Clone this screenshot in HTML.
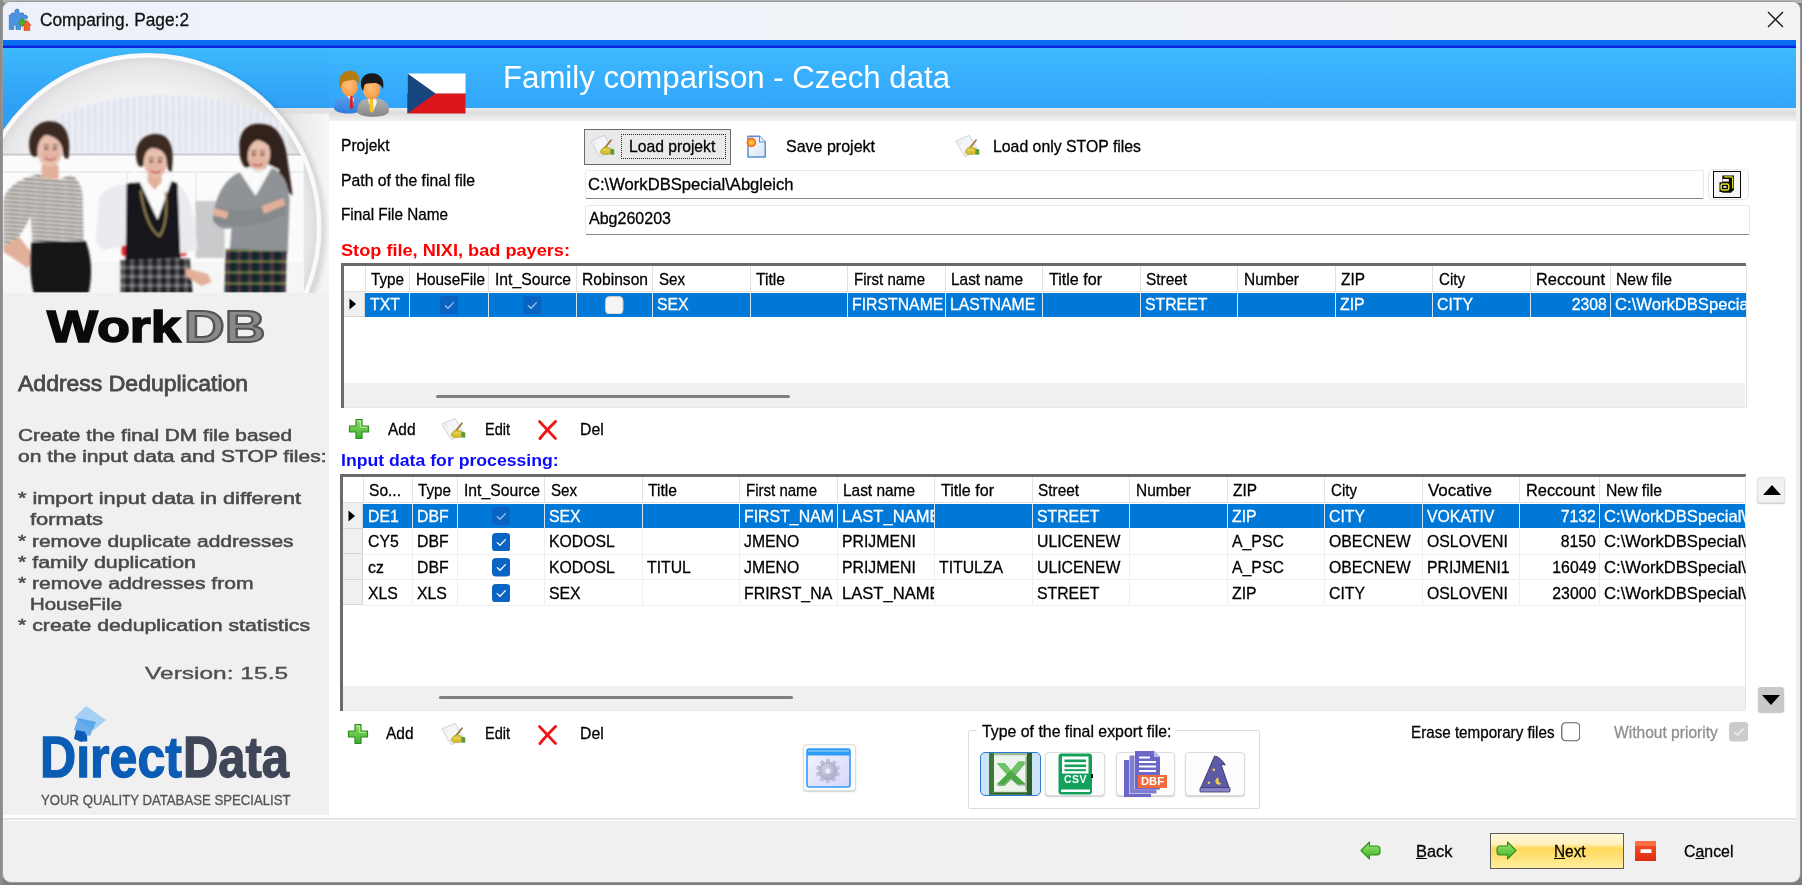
<!DOCTYPE html>
<html lang="en"><head><meta charset="utf-8"><title>Comparing. Page:2</title>
<style>
html,body{margin:0;padding:0}
body{width:1802px;height:885px;overflow:hidden;position:relative;background:#7c7c7c;font-family:"Liberation Sans", sans-serif}
#w div,#w span.t,#w svg{position:absolute;box-sizing:border-box}
#w span.t{white-space:pre;display:block}
#w{position:absolute;left:0;top:0;width:1802px;height:885px;overflow:hidden}
</style></head><body><div id="w">
<div style="left:0px;top:0px;width:1802px;height:2.5px;background:#b4b4b4"></div>
<div style="left:0px;top:0px;width:2.5px;height:885px;background:#8c8c8c"></div>
<div style="left:1.5px;top:0.5px;width:1799px;height:882.5px;background:#f0f0f0;border-radius:9px;border:1px solid #9a9a9a"></div>
<div style="left:2.5px;top:1.5px;width:1797px;height:38px;background:linear-gradient(90deg,#edf2fa 0%,#f0f3f8 50%,#f3f3f3 100%);border-radius:8px 8px 0 0"></div>
<span class="t" style="left:39.70px;top:10.56px;font-size:18px;line-height:18px;color:#111;-webkit-text-stroke:.3px;transform:scaleX(0.9607);transform-origin:left top;">Comparing. Page:2</span>
<svg style="left:1767px;top:11px" width="17" height="17" viewBox="0 0 17 17"><path d="M1 1 L16 16 M16 1 L1 16" stroke="#111" stroke-width="1.3" fill="none"/></svg>
<div style="left:3.4px;top:40px;width:1792.6px;height:8px;background:linear-gradient(#0a6cf0 0,#0a6cf0 68%,#0a22dc 70%,#0a22dc 100%)"></div>
<div style="left:3.4px;top:48px;width:1792.6px;height:60px;background:linear-gradient(#3db9fd,#32a4fb)"></div>
<div style="left:3.4px;top:108px;width:1792.6px;height:13px;background:linear-gradient(#ececec,#dcdcdc 35%,#f2f2f2)"></div>
<span class="t" style="left:503.00px;top:62.36px;font-size:31px;line-height:31px;color:#fff;transform:scaleX(1.0056);transform-origin:left top;">Family comparison - Czech data</span>
<div style="left:329px;top:121px;width:1467px;height:697px;background:#fff"></div>
<div style="left:3.4px;top:48px;width:325.6px;height:767px;background:#f0f0f0"></div>
<div style="left:3.4px;top:815px;width:1792.6px;height:2.8px;background:#fff"></div>
<div style="left:3.4px;top:817.8px;width:1792.6px;height:1.8px;background:#e3e3e3"></div>
<div style="left:3.4px;top:819.6px;width:1792.6px;height:1.6px;background:#fbfbfb"></div>
<span class="t" style="left:341.00px;top:137.11px;font-size:17px;line-height:17px;color:#000;-webkit-text-stroke:.3px;transform:scaleX(0.9164);transform-origin:left top;">Projekt</span>
<span class="t" style="left:341.00px;top:171.61px;font-size:17px;line-height:17px;color:#000;-webkit-text-stroke:.3px;transform:scaleX(0.9267);transform-origin:left top;">Path of the final file</span>
<span class="t" style="left:341.00px;top:205.91px;font-size:17px;line-height:17px;color:#000;-webkit-text-stroke:.3px;transform:scaleX(0.8988);transform-origin:left top;">Final File Name</span>
<div style="left:584.2px;top:129px;width:147px;height:35.5px;background:#e9e9e9;border:1.6px solid #6c6c6c"></div>
<div style="left:620.5px;top:133.5px;width:105.5px;height:25.5px;border:1px dotted #222"></div>
<span class="t" style="left:628.70px;top:138.11px;font-size:17px;line-height:17px;color:#000;-webkit-text-stroke:.3px;transform:scaleX(0.9222);transform-origin:left top;">Load projekt</span>
<span class="t" style="left:785.50px;top:138.11px;font-size:17px;line-height:17px;color:#000;-webkit-text-stroke:.3px;transform:scaleX(0.9418);transform-origin:left top;">Save projekt</span>
<span class="t" style="left:992.50px;top:138.11px;font-size:17px;line-height:17px;color:#000;-webkit-text-stroke:.3px;transform:scaleX(0.9304);transform-origin:left top;">Load only STOP files</span>
<div style="left:584.5px;top:170px;width:1119.5px;height:28.8px;background:#fff;border:1px solid #e9e9e9;border-bottom:1.5px solid #858585;border-radius:2px"></div>
<div style="left:584.5px;top:204.5px;width:1165px;height:30.5px;background:#fff;border:1px solid #e9e9e9;border-bottom:1.5px solid #858585;border-radius:2px"></div>
<span class="t" style="left:588.00px;top:176.11px;font-size:17px;line-height:17px;color:#000;-webkit-text-stroke:.3px;transform:scaleX(0.9768);transform-origin:left top;">C:\WorkDBSpecial\Abgleich</span>
<span class="t" style="left:589.00px;top:210.11px;font-size:17px;line-height:17px;color:#000;-webkit-text-stroke:.3px;transform:scaleX(0.9427);transform-origin:left top;">Abg260203</span>
<div style="left:1707.5px;top:169.3px;width:41.3px;height:30.5px;background:#fdfdfd;border:1px solid #e6e6e6;border-radius:5px"></div>
<div style="left:1712.9px;top:171px;width:28.2px;height:26.6px;background:#f7f7f7;border:1.7px solid #0c0c0c"></div>
<svg style="left:1718.5px;top:175.3px" width="16" height="18.5" viewBox="0 0 16 18.5"><path d="M3.3 0.6 H15 V14.8 L12 17.8 H3.3 Z" fill="#0a0a0a"/><path d="M5.2 1.9 H12.2 Q13.7 1.9 13.7 3.4 V13.6" stroke="#e6e619" stroke-width="1.2" fill="none"/><rect x="3.6" y="4" width="6.2" height="2.6" fill="#f4f4f4"/><rect x="0.5" y="7.3" width="11" height="9.7" fill="#0a0a0a"/><rect x="2.1" y="9" width="7.6" height="6.1" rx="1.6" fill="none" stroke="#e6e619" stroke-width="1.5"/><rect x="4.3" y="11" width="3.2" height="2" fill="#cfcfcf"/></svg>
<span class="t" style="left:341.00px;top:241.61px;font-size:17px;line-height:17px;color:#ff0000;font-weight:700;transform:scaleX(1.0679);transform-origin:left top;">Stop file, NIXI, bad payers:</span>
<span class="t" style="left:341.00px;top:451.81px;font-size:17px;line-height:17px;color:#0a0aff;font-weight:700;transform:scaleX(1.0382);transform-origin:left top;">Input data for processing:</span>
<div style="left:341.3px;top:263.1px;width:1405.2px;height:144.89999999999998px;background:#fff"></div>
<div style="left:341.3px;top:263.1px;width:1405.2px;height:2.5px;background:#6b6b6b"></div>
<div style="left:341.3px;top:263.1px;width:2.5px;height:144.89999999999998px;background:#6b6b6b"></div>
<div style="left:1745.5px;top:265.1px;width:1px;height:142.89999999999998px;background:#e3e3e3"></div>
<div style="left:343.8px;top:407px;width:1402.7px;height:1px;background:#e8e8e8"></div>
<div style="left:343.8px;top:383px;width:1401.7px;height:24px;background:#f0f0f0"></div>
<div style="left:436px;top:394.8px;width:354px;height:3px;background:#7f7f7f;border-radius:1.5px"></div>
<div style="left:364.5px;top:265.6px;width:1px;height:26.0px;background:#e2e2e2"></div>
<div style="left:409.0px;top:265.6px;width:1px;height:26.0px;background:#e2e2e2"></div>
<div style="left:488.2px;top:265.6px;width:1px;height:26.0px;background:#e2e2e2"></div>
<div style="left:575.5px;top:265.6px;width:1px;height:26.0px;background:#e2e2e2"></div>
<div style="left:652.0px;top:265.6px;width:1px;height:26.0px;background:#e2e2e2"></div>
<div style="left:749.5px;top:265.6px;width:1px;height:26.0px;background:#e2e2e2"></div>
<div style="left:847.0px;top:265.6px;width:1px;height:26.0px;background:#e2e2e2"></div>
<div style="left:944.5px;top:265.6px;width:1px;height:26.0px;background:#e2e2e2"></div>
<div style="left:1042.0px;top:265.6px;width:1px;height:26.0px;background:#e2e2e2"></div>
<div style="left:1139.5px;top:265.6px;width:1px;height:26.0px;background:#e2e2e2"></div>
<div style="left:1237.0px;top:265.6px;width:1px;height:26.0px;background:#e2e2e2"></div>
<div style="left:1334.5px;top:265.6px;width:1px;height:26.0px;background:#e2e2e2"></div>
<div style="left:1432.0px;top:265.6px;width:1px;height:26.0px;background:#e2e2e2"></div>
<div style="left:1529.5px;top:265.6px;width:1px;height:26.0px;background:#e2e2e2"></div>
<div style="left:1609.5px;top:265.6px;width:1px;height:26.0px;background:#e2e2e2"></div>
<div style="left:343.8px;top:291.1px;width:1401.7px;height:1px;background:#e2e2e2"></div>
<span class="t" style="left:371.00px;top:270.71px;font-size:17px;line-height:17px;color:#000;-webkit-text-stroke:.3px;transform:scaleX(0.8953);transform-origin:left top;">Type</span>
<span class="t" style="left:415.50px;top:270.71px;font-size:17px;line-height:17px;color:#000;-webkit-text-stroke:.3px;transform:scaleX(0.9014);transform-origin:left top;">HouseFile</span>
<span class="t" style="left:494.70px;top:270.71px;font-size:17px;line-height:17px;color:#000;-webkit-text-stroke:.3px;transform:scaleX(0.9242);transform-origin:left top;">Int_Source</span>
<span class="t" style="left:582.00px;top:270.71px;font-size:17px;line-height:17px;color:#000;-webkit-text-stroke:.3px;transform:scaleX(0.9189);transform-origin:left top;">Robinson</span>
<span class="t" style="left:658.50px;top:270.71px;font-size:17px;line-height:17px;color:#000;-webkit-text-stroke:.3px;transform:scaleX(0.8875);transform-origin:left top;">Sex</span>
<span class="t" style="left:756.00px;top:270.71px;font-size:17px;line-height:17px;color:#000;-webkit-text-stroke:.3px;transform:scaleX(0.9206);transform-origin:left top;">Title</span>
<span class="t" style="left:853.50px;top:270.71px;font-size:17px;line-height:17px;color:#000;-webkit-text-stroke:.3px;transform:scaleX(0.8842);transform-origin:left top;">First name</span>
<span class="t" style="left:951.00px;top:270.71px;font-size:17px;line-height:17px;color:#000;-webkit-text-stroke:.3px;transform:scaleX(0.9069);transform-origin:left top;">Last name</span>
<span class="t" style="left:1048.50px;top:270.71px;font-size:17px;line-height:17px;color:#000;-webkit-text-stroke:.3px;transform:scaleX(0.9456);transform-origin:left top;">Title for</span>
<span class="t" style="left:1146.00px;top:270.71px;font-size:17px;line-height:17px;color:#000;-webkit-text-stroke:.3px;transform:scaleX(0.9039);transform-origin:left top;">Street</span>
<span class="t" style="left:1243.50px;top:270.71px;font-size:17px;line-height:17px;color:#000;-webkit-text-stroke:.3px;transform:scaleX(0.9096);transform-origin:left top;">Number</span>
<span class="t" style="left:1341.00px;top:270.71px;font-size:17px;line-height:17px;color:#000;-webkit-text-stroke:.3px;transform:scaleX(0.9073);transform-origin:left top;">ZIP</span>
<span class="t" style="left:1438.50px;top:270.71px;font-size:17px;line-height:17px;color:#000;-webkit-text-stroke:.3px;transform:scaleX(0.8879);transform-origin:left top;">City</span>
<span class="t" style="left:1536.00px;top:270.71px;font-size:17px;line-height:17px;color:#000;-webkit-text-stroke:.3px;transform:scaleX(0.9606);transform-origin:left top;">Reccount</span>
<span class="t" style="left:1616.00px;top:270.71px;font-size:17px;line-height:17px;color:#000;-webkit-text-stroke:.3px;transform:scaleX(0.9261);transform-origin:left top;">New file</span>
<div style="left:343.8px;top:291.6px;width:21.19999999999999px;height:25.65px;background:#f0f0f0;border-right:1px solid #d5d5d5;border-bottom:1px solid #d5d5d5"></div>
<div style="left:365px;top:292.8px;width:1380.5px;height:24.15px;background:#0078d7"></div>
<svg style="left:349.3px;top:298.425px" width="8" height="12" viewBox="0 0 8 12"><path d="M0.5 0.5 L7 6 L0.5 11.5Z" fill="#000"/></svg>
<div style="left:409.0px;top:292.6px;width:1px;height:24.65px;background:#d9e6f3"></div>
<div style="left:488.2px;top:292.6px;width:1px;height:24.65px;background:#d9e6f3"></div>
<div style="left:575.5px;top:292.6px;width:1px;height:24.65px;background:#d9e6f3"></div>
<div style="left:652.0px;top:292.6px;width:1px;height:24.65px;background:#d9e6f3"></div>
<div style="left:749.5px;top:292.6px;width:1px;height:24.65px;background:#d9e6f3"></div>
<div style="left:847.0px;top:292.6px;width:1px;height:24.65px;background:#d9e6f3"></div>
<div style="left:944.5px;top:292.6px;width:1px;height:24.65px;background:#d9e6f3"></div>
<div style="left:1042.0px;top:292.6px;width:1px;height:24.65px;background:#d9e6f3"></div>
<div style="left:1139.5px;top:292.6px;width:1px;height:24.65px;background:#d9e6f3"></div>
<div style="left:1237.0px;top:292.6px;width:1px;height:24.65px;background:#d9e6f3"></div>
<div style="left:1334.5px;top:292.6px;width:1px;height:24.65px;background:#d9e6f3"></div>
<div style="left:1432.0px;top:292.6px;width:1px;height:24.65px;background:#d9e6f3"></div>
<div style="left:1529.5px;top:292.6px;width:1px;height:24.65px;background:#d9e6f3"></div>
<div style="left:1609.5px;top:292.6px;width:1px;height:24.65px;background:#d9e6f3"></div>
<span class="t" style="left:369.50px;top:296.31px;font-size:17px;line-height:17px;color:#fff;-webkit-text-stroke:.3px;transform:scaleX(0.93);transform-origin:left top;">TXT</span>
<svg style="left:439.85px;top:295.57px" width="18.5" height="18.5" viewBox="0 0 18.5 18.5"><rect x="0" y="0" width="18.5" height="18.5" rx="4" fill="#0a63c0"/><path d="M5.2 9.6 L8 12.3 L13.4 6.6" stroke="#9cc4ee" stroke-width="1.3" fill="none" stroke-linecap="round" stroke-linejoin="round"/></svg>
<svg style="left:523.10px;top:295.57px" width="18.5" height="18.5" viewBox="0 0 18.5 18.5"><rect x="0" y="0" width="18.5" height="18.5" rx="4" fill="#0a63c0"/><path d="M5.2 9.6 L8 12.3 L13.4 6.6" stroke="#9cc4ee" stroke-width="1.3" fill="none" stroke-linecap="round" stroke-linejoin="round"/></svg>
<svg style="left:605.00px;top:295.57px" width="18.5" height="18.5" viewBox="0 0 18.5 18.5"><rect x="0.5" y="0.5" width="17.5" height="17.5" rx="4" fill="#f4f4f4" stroke="#c9c9c9"/></svg>
<span class="t" style="left:657.00px;top:296.31px;font-size:17px;line-height:17px;color:#fff;-webkit-text-stroke:.3px;transform:scaleX(0.93);transform-origin:left top;">SEX</span>
<div style="left:852.0px;top:291.6px;width:92.5px;height:25.65px;overflow:hidden"><span class="t" style="left:0;top:4.71px;font-size:17px;line-height:17px;color:#fff;-webkit-text-stroke:.3px;transform:scaleX(0.93);transform-origin:left top">FIRSTNAME</span></div>
<div style="left:949.5px;top:291.6px;width:92.5px;height:25.65px;overflow:hidden"><span class="t" style="left:0;top:4.71px;font-size:17px;line-height:17px;color:#fff;-webkit-text-stroke:.3px;transform:scaleX(0.93);transform-origin:left top">LASTNAME</span></div>
<span class="t" style="left:1144.50px;top:296.31px;font-size:17px;line-height:17px;color:#fff;-webkit-text-stroke:.3px;transform:scaleX(0.93);transform-origin:left top;">STREET</span>
<span class="t" style="left:1339.50px;top:296.31px;font-size:17px;line-height:17px;color:#fff;-webkit-text-stroke:.3px;transform:scaleX(0.93);transform-origin:left top;">ZIP</span>
<span class="t" style="left:1437.00px;top:296.31px;font-size:17px;line-height:17px;color:#fff;-webkit-text-stroke:.3px;transform:scaleX(0.93);transform-origin:left top;">CITY</span>
<span class="t" style="left:1568.67px;top:296.31px;font-size:17px;line-height:17px;color:#fff;-webkit-text-stroke:.3px;transform:scaleX(0.93);transform-origin:right top;">2308</span>
<div style="left:1614.5px;top:291.6px;width:131.5px;height:25.65px;overflow:hidden"><span class="t" style="left:0;top:4.71px;font-size:17px;line-height:17px;color:#fff;-webkit-text-stroke:.3px;transform:scaleX(0.978);transform-origin:left top">C:\WorkDBSpecial\</span></div>
<div style="left:340.1px;top:474.4px;width:1405.9px;height:236.60000000000002px;background:#fff"></div>
<div style="left:340.1px;top:474.4px;width:1405.9px;height:2.5px;background:#6b6b6b"></div>
<div style="left:340.1px;top:474.4px;width:2.5px;height:236.60000000000002px;background:#6b6b6b"></div>
<div style="left:1745px;top:476.4px;width:1px;height:234.60000000000002px;background:#e3e3e3"></div>
<div style="left:342.6px;top:710px;width:1403.4px;height:1px;background:#e8e8e8"></div>
<div style="left:342.6px;top:685.5px;width:1402.4px;height:24.5px;background:#f0f0f0"></div>
<div style="left:438.7px;top:696.3px;width:354.3px;height:3px;background:#7f7f7f;border-radius:1.5px"></div>
<div style="left:362.8px;top:476.9px;width:1px;height:26.0px;background:#e2e2e2"></div>
<div style="left:411.5px;top:476.9px;width:1px;height:26.0px;background:#e2e2e2"></div>
<div style="left:457.0px;top:476.9px;width:1px;height:26.0px;background:#e2e2e2"></div>
<div style="left:544.0px;top:476.9px;width:1px;height:26.0px;background:#e2e2e2"></div>
<div style="left:641.5px;top:476.9px;width:1px;height:26.0px;background:#e2e2e2"></div>
<div style="left:739.0px;top:476.9px;width:1px;height:26.0px;background:#e2e2e2"></div>
<div style="left:836.5px;top:476.9px;width:1px;height:26.0px;background:#e2e2e2"></div>
<div style="left:934.0px;top:476.9px;width:1px;height:26.0px;background:#e2e2e2"></div>
<div style="left:1031.5px;top:476.9px;width:1px;height:26.0px;background:#e2e2e2"></div>
<div style="left:1129.0px;top:476.9px;width:1px;height:26.0px;background:#e2e2e2"></div>
<div style="left:1226.5px;top:476.9px;width:1px;height:26.0px;background:#e2e2e2"></div>
<div style="left:1324.0px;top:476.9px;width:1px;height:26.0px;background:#e2e2e2"></div>
<div style="left:1421.5px;top:476.9px;width:1px;height:26.0px;background:#e2e2e2"></div>
<div style="left:1519.0px;top:476.9px;width:1px;height:26.0px;background:#e2e2e2"></div>
<div style="left:1599.0px;top:476.9px;width:1px;height:26.0px;background:#e2e2e2"></div>
<div style="left:342.6px;top:502.4px;width:1402.4px;height:1px;background:#e2e2e2"></div>
<span class="t" style="left:369.30px;top:482.01px;font-size:17px;line-height:17px;color:#000;-webkit-text-stroke:.3px;transform:scaleX(0.9151);transform-origin:left top;">So...</span>
<span class="t" style="left:418.00px;top:482.01px;font-size:17px;line-height:17px;color:#000;-webkit-text-stroke:.3px;transform:scaleX(0.8953);transform-origin:left top;">Type</span>
<span class="t" style="left:463.50px;top:482.01px;font-size:17px;line-height:17px;color:#000;-webkit-text-stroke:.3px;transform:scaleX(0.9242);transform-origin:left top;">Int_Source</span>
<span class="t" style="left:550.50px;top:482.01px;font-size:17px;line-height:17px;color:#000;-webkit-text-stroke:.3px;transform:scaleX(0.8875);transform-origin:left top;">Sex</span>
<span class="t" style="left:648.00px;top:482.01px;font-size:17px;line-height:17px;color:#000;-webkit-text-stroke:.3px;transform:scaleX(0.9206);transform-origin:left top;">Title</span>
<span class="t" style="left:745.50px;top:482.01px;font-size:17px;line-height:17px;color:#000;-webkit-text-stroke:.3px;transform:scaleX(0.8842);transform-origin:left top;">First name</span>
<span class="t" style="left:843.00px;top:482.01px;font-size:17px;line-height:17px;color:#000;-webkit-text-stroke:.3px;transform:scaleX(0.9069);transform-origin:left top;">Last name</span>
<span class="t" style="left:940.50px;top:482.01px;font-size:17px;line-height:17px;color:#000;-webkit-text-stroke:.3px;transform:scaleX(0.9456);transform-origin:left top;">Title for</span>
<span class="t" style="left:1038.00px;top:482.01px;font-size:17px;line-height:17px;color:#000;-webkit-text-stroke:.3px;transform:scaleX(0.9039);transform-origin:left top;">Street</span>
<span class="t" style="left:1135.50px;top:482.01px;font-size:17px;line-height:17px;color:#000;-webkit-text-stroke:.3px;transform:scaleX(0.9096);transform-origin:left top;">Number</span>
<span class="t" style="left:1233.00px;top:482.01px;font-size:17px;line-height:17px;color:#000;-webkit-text-stroke:.3px;transform:scaleX(0.9073);transform-origin:left top;">ZIP</span>
<span class="t" style="left:1330.50px;top:482.01px;font-size:17px;line-height:17px;color:#000;-webkit-text-stroke:.3px;transform:scaleX(0.8879);transform-origin:left top;">City</span>
<span class="t" style="left:1428.00px;top:482.01px;font-size:17px;line-height:17px;color:#000;-webkit-text-stroke:.3px;transform:scaleX(0.9959);transform-origin:left top;">Vocative</span>
<span class="t" style="left:1525.50px;top:482.01px;font-size:17px;line-height:17px;color:#000;-webkit-text-stroke:.3px;transform:scaleX(0.9606);transform-origin:left top;">Reccount</span>
<span class="t" style="left:1605.50px;top:482.01px;font-size:17px;line-height:17px;color:#000;-webkit-text-stroke:.3px;transform:scaleX(0.9261);transform-origin:left top;">New file</span>
<div style="left:342.6px;top:502.9px;width:20.69999999999999px;height:25.65px;background:#f0f0f0;border-right:1px solid #d5d5d5;border-bottom:1px solid #d5d5d5"></div>
<div style="left:363.3px;top:504.09999999999997px;width:1381.7px;height:24.15px;background:#0078d7"></div>
<svg style="left:348.1px;top:509.725px" width="8" height="12" viewBox="0 0 8 12"><path d="M0.5 0.5 L7 6 L0.5 11.5Z" fill="#000"/></svg>
<div style="left:411.5px;top:503.9px;width:1px;height:24.65px;background:#d9e6f3"></div>
<div style="left:457.0px;top:503.9px;width:1px;height:24.65px;background:#d9e6f3"></div>
<div style="left:544.0px;top:503.9px;width:1px;height:24.65px;background:#d9e6f3"></div>
<div style="left:641.5px;top:503.9px;width:1px;height:24.65px;background:#d9e6f3"></div>
<div style="left:739.0px;top:503.9px;width:1px;height:24.65px;background:#d9e6f3"></div>
<div style="left:836.5px;top:503.9px;width:1px;height:24.65px;background:#d9e6f3"></div>
<div style="left:934.0px;top:503.9px;width:1px;height:24.65px;background:#d9e6f3"></div>
<div style="left:1031.5px;top:503.9px;width:1px;height:24.65px;background:#d9e6f3"></div>
<div style="left:1129.0px;top:503.9px;width:1px;height:24.65px;background:#d9e6f3"></div>
<div style="left:1226.5px;top:503.9px;width:1px;height:24.65px;background:#d9e6f3"></div>
<div style="left:1324.0px;top:503.9px;width:1px;height:24.65px;background:#d9e6f3"></div>
<div style="left:1421.5px;top:503.9px;width:1px;height:24.65px;background:#d9e6f3"></div>
<div style="left:1519.0px;top:503.9px;width:1px;height:24.65px;background:#d9e6f3"></div>
<div style="left:1599.0px;top:503.9px;width:1px;height:24.65px;background:#d9e6f3"></div>
<span class="t" style="left:367.80px;top:507.61px;font-size:17px;line-height:17px;color:#fff;-webkit-text-stroke:.3px;transform:scaleX(0.93);transform-origin:left top;">DE1</span>
<span class="t" style="left:416.50px;top:507.61px;font-size:17px;line-height:17px;color:#fff;-webkit-text-stroke:.3px;transform:scaleX(0.93);transform-origin:left top;">DBF</span>
<svg style="left:491.75px;top:506.88px" width="18.5" height="18.5" viewBox="0 0 18.5 18.5"><rect x="0" y="0" width="18.5" height="18.5" rx="4" fill="#0a63c0"/><path d="M5.2 9.6 L8 12.3 L13.4 6.6" stroke="#9cc4ee" stroke-width="1.3" fill="none" stroke-linecap="round" stroke-linejoin="round"/></svg>
<span class="t" style="left:549.00px;top:507.61px;font-size:17px;line-height:17px;color:#fff;-webkit-text-stroke:.3px;transform:scaleX(0.93);transform-origin:left top;">SEX</span>
<div style="left:744.0px;top:502.9px;width:92.5px;height:25.65px;overflow:hidden"><span class="t" style="left:0;top:4.71px;font-size:17px;line-height:17px;color:#fff;-webkit-text-stroke:.3px;transform:scaleX(0.934);transform-origin:left top">FIRST_NAM</span></div>
<div style="left:841.5px;top:502.9px;width:92.5px;height:25.65px;overflow:hidden"><span class="t" style="left:0;top:4.71px;font-size:17px;line-height:17px;color:#fff;-webkit-text-stroke:.3px;transform:scaleX(0.975);transform-origin:left top">LAST_NAME</span></div>
<span class="t" style="left:1036.50px;top:507.61px;font-size:17px;line-height:17px;color:#fff;-webkit-text-stroke:.3px;transform:scaleX(0.93);transform-origin:left top;">STREET</span>
<span class="t" style="left:1231.50px;top:507.61px;font-size:17px;line-height:17px;color:#fff;-webkit-text-stroke:.3px;transform:scaleX(0.93);transform-origin:left top;">ZIP</span>
<span class="t" style="left:1329.00px;top:507.61px;font-size:17px;line-height:17px;color:#fff;-webkit-text-stroke:.3px;transform:scaleX(0.93);transform-origin:left top;">CITY</span>
<span class="t" style="left:1426.50px;top:507.61px;font-size:17px;line-height:17px;color:#fff;-webkit-text-stroke:.3px;transform:scaleX(0.93);transform-origin:left top;">VOKATIV</span>
<span class="t" style="left:1558.17px;top:507.61px;font-size:17px;line-height:17px;color:#fff;-webkit-text-stroke:.3px;transform:scaleX(0.93);transform-origin:right top;">7132</span>
<div style="left:1604.0px;top:502.9px;width:141.5px;height:25.65px;overflow:hidden"><span class="t" style="left:0;top:4.71px;font-size:17px;line-height:17px;color:#fff;-webkit-text-stroke:.3px;transform:scaleX(0.978);transform-origin:left top">C:\WorkDBSpecial\</span></div>
<div style="left:342.6px;top:528.55px;width:20.69999999999999px;height:25.65px;background:#f0f0f0;border-right:1px solid #d5d5d5;border-bottom:1px solid #d5d5d5"></div>
<div style="left:363.3px;top:553.6999999999999px;width:1381.7px;height:1px;background:#efefef"></div>
<div style="left:411.5px;top:529.55px;width:1px;height:24.65px;background:#efefef"></div>
<div style="left:457.0px;top:529.55px;width:1px;height:24.65px;background:#efefef"></div>
<div style="left:544.0px;top:529.55px;width:1px;height:24.65px;background:#efefef"></div>
<div style="left:641.5px;top:529.55px;width:1px;height:24.65px;background:#efefef"></div>
<div style="left:739.0px;top:529.55px;width:1px;height:24.65px;background:#efefef"></div>
<div style="left:836.5px;top:529.55px;width:1px;height:24.65px;background:#efefef"></div>
<div style="left:934.0px;top:529.55px;width:1px;height:24.65px;background:#efefef"></div>
<div style="left:1031.5px;top:529.55px;width:1px;height:24.65px;background:#efefef"></div>
<div style="left:1129.0px;top:529.55px;width:1px;height:24.65px;background:#efefef"></div>
<div style="left:1226.5px;top:529.55px;width:1px;height:24.65px;background:#efefef"></div>
<div style="left:1324.0px;top:529.55px;width:1px;height:24.65px;background:#efefef"></div>
<div style="left:1421.5px;top:529.55px;width:1px;height:24.65px;background:#efefef"></div>
<div style="left:1519.0px;top:529.55px;width:1px;height:24.65px;background:#efefef"></div>
<div style="left:1599.0px;top:529.55px;width:1px;height:24.65px;background:#efefef"></div>
<span class="t" style="left:367.80px;top:533.26px;font-size:17px;line-height:17px;color:#000;-webkit-text-stroke:.3px;transform:scaleX(0.93);transform-origin:left top;">CY5</span>
<span class="t" style="left:416.50px;top:533.26px;font-size:17px;line-height:17px;color:#000;-webkit-text-stroke:.3px;transform:scaleX(0.93);transform-origin:left top;">DBF</span>
<svg style="left:491.75px;top:532.52px" width="18.5" height="18.5" viewBox="0 0 18.5 18.5"><rect x="0" y="0" width="18.5" height="18.5" rx="4" fill="#0a64c4"/><path d="M5.2 9.6 L8 12.3 L13.4 6.6" stroke="#fff" stroke-width="1.3" fill="none" stroke-linecap="round" stroke-linejoin="round"/></svg>
<span class="t" style="left:549.00px;top:533.26px;font-size:17px;line-height:17px;color:#000;-webkit-text-stroke:.3px;transform:scaleX(0.93);transform-origin:left top;">KODOSL</span>
<span class="t" style="left:744.00px;top:533.26px;font-size:17px;line-height:17px;color:#000;-webkit-text-stroke:.3px;transform:scaleX(0.93);transform-origin:left top;">JMENO</span>
<span class="t" style="left:841.50px;top:533.26px;font-size:17px;line-height:17px;color:#000;-webkit-text-stroke:.3px;transform:scaleX(0.93);transform-origin:left top;">PRIJMENI</span>
<span class="t" style="left:1036.50px;top:533.26px;font-size:17px;line-height:17px;color:#000;-webkit-text-stroke:.3px;transform:scaleX(0.93);transform-origin:left top;">ULICENEW</span>
<span class="t" style="left:1231.50px;top:533.26px;font-size:17px;line-height:17px;color:#000;-webkit-text-stroke:.3px;transform:scaleX(0.93);transform-origin:left top;">A_PSC</span>
<span class="t" style="left:1329.00px;top:533.26px;font-size:17px;line-height:17px;color:#000;-webkit-text-stroke:.3px;transform:scaleX(0.93);transform-origin:left top;">OBECNEW</span>
<span class="t" style="left:1426.50px;top:533.26px;font-size:17px;line-height:17px;color:#000;-webkit-text-stroke:.3px;transform:scaleX(0.93);transform-origin:left top;">OSLOVENI</span>
<span class="t" style="left:1558.17px;top:533.26px;font-size:17px;line-height:17px;color:#000;-webkit-text-stroke:.3px;transform:scaleX(0.93);transform-origin:right top;">8150</span>
<div style="left:1604.0px;top:528.55px;width:141.5px;height:25.65px;overflow:hidden"><span class="t" style="left:0;top:4.71px;font-size:17px;line-height:17px;color:#000;-webkit-text-stroke:.3px;transform:scaleX(0.978);transform-origin:left top">C:\WorkDBSpecial\</span></div>
<div style="left:342.6px;top:554.1999999999999px;width:20.69999999999999px;height:25.65px;background:#f0f0f0;border-right:1px solid #d5d5d5;border-bottom:1px solid #d5d5d5"></div>
<div style="left:363.3px;top:579.3499999999999px;width:1381.7px;height:1px;background:#efefef"></div>
<div style="left:411.5px;top:555.1999999999999px;width:1px;height:24.65px;background:#efefef"></div>
<div style="left:457.0px;top:555.1999999999999px;width:1px;height:24.65px;background:#efefef"></div>
<div style="left:544.0px;top:555.1999999999999px;width:1px;height:24.65px;background:#efefef"></div>
<div style="left:641.5px;top:555.1999999999999px;width:1px;height:24.65px;background:#efefef"></div>
<div style="left:739.0px;top:555.1999999999999px;width:1px;height:24.65px;background:#efefef"></div>
<div style="left:836.5px;top:555.1999999999999px;width:1px;height:24.65px;background:#efefef"></div>
<div style="left:934.0px;top:555.1999999999999px;width:1px;height:24.65px;background:#efefef"></div>
<div style="left:1031.5px;top:555.1999999999999px;width:1px;height:24.65px;background:#efefef"></div>
<div style="left:1129.0px;top:555.1999999999999px;width:1px;height:24.65px;background:#efefef"></div>
<div style="left:1226.5px;top:555.1999999999999px;width:1px;height:24.65px;background:#efefef"></div>
<div style="left:1324.0px;top:555.1999999999999px;width:1px;height:24.65px;background:#efefef"></div>
<div style="left:1421.5px;top:555.1999999999999px;width:1px;height:24.65px;background:#efefef"></div>
<div style="left:1519.0px;top:555.1999999999999px;width:1px;height:24.65px;background:#efefef"></div>
<div style="left:1599.0px;top:555.1999999999999px;width:1px;height:24.65px;background:#efefef"></div>
<span class="t" style="left:367.80px;top:558.91px;font-size:17px;line-height:17px;color:#000;-webkit-text-stroke:.3px;transform:scaleX(0.93);transform-origin:left top;">cz</span>
<span class="t" style="left:416.50px;top:558.91px;font-size:17px;line-height:17px;color:#000;-webkit-text-stroke:.3px;transform:scaleX(0.93);transform-origin:left top;">DBF</span>
<svg style="left:491.75px;top:558.17px" width="18.5" height="18.5" viewBox="0 0 18.5 18.5"><rect x="0" y="0" width="18.5" height="18.5" rx="4" fill="#0a64c4"/><path d="M5.2 9.6 L8 12.3 L13.4 6.6" stroke="#fff" stroke-width="1.3" fill="none" stroke-linecap="round" stroke-linejoin="round"/></svg>
<span class="t" style="left:549.00px;top:558.91px;font-size:17px;line-height:17px;color:#000;-webkit-text-stroke:.3px;transform:scaleX(0.93);transform-origin:left top;">KODOSL</span>
<span class="t" style="left:646.50px;top:558.91px;font-size:17px;line-height:17px;color:#000;-webkit-text-stroke:.3px;transform:scaleX(0.93);transform-origin:left top;">TITUL</span>
<span class="t" style="left:744.00px;top:558.91px;font-size:17px;line-height:17px;color:#000;-webkit-text-stroke:.3px;transform:scaleX(0.93);transform-origin:left top;">JMENO</span>
<span class="t" style="left:841.50px;top:558.91px;font-size:17px;line-height:17px;color:#000;-webkit-text-stroke:.3px;transform:scaleX(0.93);transform-origin:left top;">PRIJMENI</span>
<span class="t" style="left:939.00px;top:558.91px;font-size:17px;line-height:17px;color:#000;-webkit-text-stroke:.3px;transform:scaleX(0.93);transform-origin:left top;">TITULZA</span>
<span class="t" style="left:1036.50px;top:558.91px;font-size:17px;line-height:17px;color:#000;-webkit-text-stroke:.3px;transform:scaleX(0.93);transform-origin:left top;">ULICENEW</span>
<span class="t" style="left:1231.50px;top:558.91px;font-size:17px;line-height:17px;color:#000;-webkit-text-stroke:.3px;transform:scaleX(0.93);transform-origin:left top;">A_PSC</span>
<span class="t" style="left:1329.00px;top:558.91px;font-size:17px;line-height:17px;color:#000;-webkit-text-stroke:.3px;transform:scaleX(0.93);transform-origin:left top;">OBECNEW</span>
<span class="t" style="left:1426.50px;top:558.91px;font-size:17px;line-height:17px;color:#000;-webkit-text-stroke:.3px;transform:scaleX(0.93);transform-origin:left top;">PRIJMENI1</span>
<span class="t" style="left:1548.72px;top:558.91px;font-size:17px;line-height:17px;color:#000;-webkit-text-stroke:.3px;transform:scaleX(0.93);transform-origin:right top;">16049</span>
<div style="left:1604.0px;top:554.1999999999999px;width:141.5px;height:25.65px;overflow:hidden"><span class="t" style="left:0;top:4.71px;font-size:17px;line-height:17px;color:#000;-webkit-text-stroke:.3px;transform:scaleX(0.978);transform-origin:left top">C:\WorkDBSpecial\</span></div>
<div style="left:342.6px;top:579.8499999999999px;width:20.69999999999999px;height:25.65px;background:#f0f0f0;border-right:1px solid #d5d5d5;border-bottom:1px solid #d5d5d5"></div>
<div style="left:363.3px;top:604.9999999999999px;width:1381.7px;height:1px;background:#efefef"></div>
<div style="left:411.5px;top:580.8499999999999px;width:1px;height:24.65px;background:#efefef"></div>
<div style="left:457.0px;top:580.8499999999999px;width:1px;height:24.65px;background:#efefef"></div>
<div style="left:544.0px;top:580.8499999999999px;width:1px;height:24.65px;background:#efefef"></div>
<div style="left:641.5px;top:580.8499999999999px;width:1px;height:24.65px;background:#efefef"></div>
<div style="left:739.0px;top:580.8499999999999px;width:1px;height:24.65px;background:#efefef"></div>
<div style="left:836.5px;top:580.8499999999999px;width:1px;height:24.65px;background:#efefef"></div>
<div style="left:934.0px;top:580.8499999999999px;width:1px;height:24.65px;background:#efefef"></div>
<div style="left:1031.5px;top:580.8499999999999px;width:1px;height:24.65px;background:#efefef"></div>
<div style="left:1129.0px;top:580.8499999999999px;width:1px;height:24.65px;background:#efefef"></div>
<div style="left:1226.5px;top:580.8499999999999px;width:1px;height:24.65px;background:#efefef"></div>
<div style="left:1324.0px;top:580.8499999999999px;width:1px;height:24.65px;background:#efefef"></div>
<div style="left:1421.5px;top:580.8499999999999px;width:1px;height:24.65px;background:#efefef"></div>
<div style="left:1519.0px;top:580.8499999999999px;width:1px;height:24.65px;background:#efefef"></div>
<div style="left:1599.0px;top:580.8499999999999px;width:1px;height:24.65px;background:#efefef"></div>
<span class="t" style="left:367.80px;top:584.56px;font-size:17px;line-height:17px;color:#000;-webkit-text-stroke:.3px;transform:scaleX(0.93);transform-origin:left top;">XLS</span>
<span class="t" style="left:416.50px;top:584.56px;font-size:17px;line-height:17px;color:#000;-webkit-text-stroke:.3px;transform:scaleX(0.93);transform-origin:left top;">XLS</span>
<svg style="left:491.75px;top:583.82px" width="18.5" height="18.5" viewBox="0 0 18.5 18.5"><rect x="0" y="0" width="18.5" height="18.5" rx="4" fill="#0a64c4"/><path d="M5.2 9.6 L8 12.3 L13.4 6.6" stroke="#fff" stroke-width="1.3" fill="none" stroke-linecap="round" stroke-linejoin="round"/></svg>
<span class="t" style="left:549.00px;top:584.56px;font-size:17px;line-height:17px;color:#000;-webkit-text-stroke:.3px;transform:scaleX(0.93);transform-origin:left top;">SEX</span>
<div style="left:744.0px;top:579.8499999999999px;width:92.5px;height:25.65px;overflow:hidden"><span class="t" style="left:0;top:4.71px;font-size:17px;line-height:17px;color:#000;-webkit-text-stroke:.3px;transform:scaleX(0.934);transform-origin:left top">FRIRST_NA</span></div>
<div style="left:841.5px;top:579.8499999999999px;width:92.5px;height:25.65px;overflow:hidden"><span class="t" style="left:0;top:4.71px;font-size:17px;line-height:17px;color:#000;-webkit-text-stroke:.3px;transform:scaleX(0.975);transform-origin:left top">LAST_NAME</span></div>
<span class="t" style="left:1036.50px;top:584.56px;font-size:17px;line-height:17px;color:#000;-webkit-text-stroke:.3px;transform:scaleX(0.93);transform-origin:left top;">STREET</span>
<span class="t" style="left:1231.50px;top:584.56px;font-size:17px;line-height:17px;color:#000;-webkit-text-stroke:.3px;transform:scaleX(0.93);transform-origin:left top;">ZIP</span>
<span class="t" style="left:1329.00px;top:584.56px;font-size:17px;line-height:17px;color:#000;-webkit-text-stroke:.3px;transform:scaleX(0.93);transform-origin:left top;">CITY</span>
<span class="t" style="left:1426.50px;top:584.56px;font-size:17px;line-height:17px;color:#000;-webkit-text-stroke:.3px;transform:scaleX(0.93);transform-origin:left top;">OSLOVENI</span>
<span class="t" style="left:1548.72px;top:584.56px;font-size:17px;line-height:17px;color:#000;-webkit-text-stroke:.3px;transform:scaleX(0.93);transform-origin:right top;">23000</span>
<div style="left:1604.0px;top:579.8499999999999px;width:141.5px;height:25.65px;overflow:hidden"><span class="t" style="left:0;top:4.71px;font-size:17px;line-height:17px;color:#000;-webkit-text-stroke:.3px;transform:scaleX(0.978);transform-origin:left top">C:\WorkDBSpecial\</span></div>
<svg style="left:348.2px;top:418.4px" width="22" height="22" viewBox="0 0 22 22"><defs><linearGradient id="gp418" x1="0" y1="0" x2="0" y2="1"><stop offset="0" stop-color="#8fe06a"/><stop offset="1" stop-color="#3fae2a"/></linearGradient></defs><path d="M8 1.5h6v6.5h6.5v6H14v6.5H8V14H1.5V8H8z" fill="url(#gp418)" stroke="#2f8a22" stroke-width="1.2" stroke-linejoin="round"/><path d="M9.3 3h3.4v6.3h6.3" stroke="#c9f5b4" stroke-width="1" fill="none" opacity=".8"/></svg>
<svg style="left:441px;top:417.5px" width="25" height="23.00" viewBox="0 0 25 23"><path d="M0.8 6 L14 0.3 L23.3 15.4 L10.1 21.8Z" fill="#f3f5f8" stroke="#c9cdd4" stroke-width=".9" stroke-linejoin="round"/><path d="M3.2 7.2 L6 6 M4.2 9.4 L7 8.2" stroke="#d9dde3" stroke-width=".8"/><path d="M21 5.2 L14.2 13.6" stroke="#9a7440" stroke-width="1.7" stroke-linecap="round"/><path d="M10.3 16.6 C11 13.5 14.5 11.6 17.2 12.1 C19.3 12.5 20.8 13.6 21.6 15.2 L21.2 18.6 C18.5 19.6 15.5 19.6 12.6 19.2 C11 19 10.1 18 10.3 16.6Z" fill="#d6c033" stroke="#b39b22" stroke-width=".7"/><path d="M13 15.5 C15 14.6 17 14.6 19 15.6" stroke="#f0e27a" stroke-width="1" fill="none"/><path d="M20.6 13.8 L24.2 14.6 L24.3 19.8 L20.3 19.6Z" fill="#5a9a38"/></svg>
<svg style="left:537.5px;top:420px" width="20" height="20" viewBox="0 0 20 20"><path d="M1.5 1.5 L17.5 18.5" stroke="#f01414" stroke-width="2.6" stroke-linecap="round"/><path d="M17.5 1.5 C12 7 7 12 2 18.5" stroke="#f01414" stroke-width="2.9" stroke-linecap="round" fill="none"/></svg>
<span class="t" style="left:387.50px;top:420.61px;font-size:17px;line-height:17px;color:#000;-webkit-text-stroke:.3px;transform:scaleX(0.9091);transform-origin:left top;">Add</span>
<span class="t" style="left:484.50px;top:420.61px;font-size:17px;line-height:17px;color:#000;-webkit-text-stroke:.3px;transform:scaleX(0.8533);transform-origin:left top;">Edit</span>
<span class="t" style="left:580.00px;top:420.61px;font-size:17px;line-height:17px;color:#000;-webkit-text-stroke:.3px;transform:scaleX(0.9288);transform-origin:left top;">Del</span>
<svg style="left:346.5px;top:723.4000000000001px" width="22" height="22" viewBox="0 0 22 22"><defs><linearGradient id="gp723" x1="0" y1="0" x2="0" y2="1"><stop offset="0" stop-color="#8fe06a"/><stop offset="1" stop-color="#3fae2a"/></linearGradient></defs><path d="M8 1.5h6v6.5h6.5v6H14v6.5H8V14H1.5V8H8z" fill="url(#gp723)" stroke="#2f8a22" stroke-width="1.2" stroke-linejoin="round"/><path d="M9.3 3h3.4v6.3h6.3" stroke="#c9f5b4" stroke-width="1" fill="none" opacity=".8"/></svg>
<svg style="left:441px;top:722.5px" width="25" height="23.00" viewBox="0 0 25 23"><path d="M0.8 6 L14 0.3 L23.3 15.4 L10.1 21.8Z" fill="#f3f5f8" stroke="#c9cdd4" stroke-width=".9" stroke-linejoin="round"/><path d="M3.2 7.2 L6 6 M4.2 9.4 L7 8.2" stroke="#d9dde3" stroke-width=".8"/><path d="M21 5.2 L14.2 13.6" stroke="#9a7440" stroke-width="1.7" stroke-linecap="round"/><path d="M10.3 16.6 C11 13.5 14.5 11.6 17.2 12.1 C19.3 12.5 20.8 13.6 21.6 15.2 L21.2 18.6 C18.5 19.6 15.5 19.6 12.6 19.2 C11 19 10.1 18 10.3 16.6Z" fill="#d6c033" stroke="#b39b22" stroke-width=".7"/><path d="M13 15.5 C15 14.6 17 14.6 19 15.6" stroke="#f0e27a" stroke-width="1" fill="none"/><path d="M20.6 13.8 L24.2 14.6 L24.3 19.8 L20.3 19.6Z" fill="#5a9a38"/></svg>
<svg style="left:537.5px;top:724.5px" width="20" height="20" viewBox="0 0 20 20"><path d="M1.5 1.5 L17.5 18.5" stroke="#f01414" stroke-width="2.6" stroke-linecap="round"/><path d="M17.5 1.5 C12 7 7 12 2 18.5" stroke="#f01414" stroke-width="2.9" stroke-linecap="round" fill="none"/></svg>
<span class="t" style="left:386.00px;top:725.11px;font-size:17px;line-height:17px;color:#000;-webkit-text-stroke:.3px;transform:scaleX(0.9091);transform-origin:left top;">Add</span>
<span class="t" style="left:484.50px;top:725.11px;font-size:17px;line-height:17px;color:#000;-webkit-text-stroke:.3px;transform:scaleX(0.8533);transform-origin:left top;">Edit</span>
<span class="t" style="left:580.00px;top:725.11px;font-size:17px;line-height:17px;color:#000;-webkit-text-stroke:.3px;transform:scaleX(0.9288);transform-origin:left top;">Del</span>
<div style="left:802.8px;top:744.3px;width:53px;height:47px;background:#fdfdfd;border:1px solid #dddddd;border-radius:4px;box-shadow:0 1px 1.5px rgba(0,0,0,.18)"></div>
<svg style="left:805.8px;top:748.4px" width="45" height="40" viewBox="0 0 45 40"><defs><linearGradient id="sb" x1="0" y1="0" x2="1" y2="1"><stop offset="0" stop-color="#f3f3ff"/><stop offset="1" stop-color="#d6d6fa"/></linearGradient><radialGradient id="sg" cx=".4" cy=".35" r=".8"><stop offset="0" stop-color="#d0d0e4"/><stop offset="1" stop-color="#a4a4c4"/></radialGradient></defs><rect x="1" y="1" width="43" height="38" rx="2" fill="url(#sb)" stroke="#2f9cf8" stroke-width="1.6"/><rect x="1" y="1" width="43" height="6.5" fill="#2f9cf8"/><rect x="2" y="2" width="41" height="2" fill="#6cbcfb"/><g transform="translate(22,23)"><g fill="url(#sg)"><circle r="9.3"/><rect x="-2" y="-12" width="4" height="4.5" rx="1.2"/><rect x="-2" y="-12" width="4" height="4.5" rx="1.2" transform="rotate(36)"/><rect x="-2" y="-12" width="4" height="4.5" rx="1.2" transform="rotate(72)"/><rect x="-2" y="-12" width="4" height="4.5" rx="1.2" transform="rotate(108)"/><rect x="-2" y="-12" width="4" height="4.5" rx="1.2" transform="rotate(144)"/><rect x="-2" y="-12" width="4" height="4.5" rx="1.2" transform="rotate(180)"/><rect x="-2" y="-12" width="4" height="4.5" rx="1.2" transform="rotate(216)"/><rect x="-2" y="-12" width="4" height="4.5" rx="1.2" transform="rotate(252)"/><rect x="-2" y="-12" width="4" height="4.5" rx="1.2" transform="rotate(288)"/><rect x="-2" y="-12" width="4" height="4.5" rx="1.2" transform="rotate(324)"/></g><circle r="2.6" fill="#ebebfb"/></g></svg>
<div style="left:968px;top:730px;width:291.5px;height:78.5px;border:1px solid #dcdcdc;border-radius:2px"></div>
<div style="left:977px;top:722px;width:198px;height:14px;background:#fff"></div>
<span class="t" style="left:981.70px;top:722.61px;font-size:17px;line-height:17px;color:#000;-webkit-text-stroke:.3px;transform:scaleX(0.9327);transform-origin:left top;">Type of the final export file:</span>
<div style="left:980.3px;top:752px;width:60.5px;height:44px;background:#cde4f7;border:1.5px solid #2a7ad0;border-radius:5px"></div>
<div style="left:1045px;top:752px;width:59.6px;height:44px;background:#fdfdfd;border:1px solid #dcdcdc;border-radius:4px;box-shadow:0 1px 1.5px rgba(0,0,0,.2)"></div>
<div style="left:1115.8px;top:752px;width:59.7px;height:44px;background:#fdfdfd;border:1px solid #dcdcdc;border-radius:4px;box-shadow:0 1px 1.5px rgba(0,0,0,.2)"></div>
<div style="left:1185.3px;top:752px;width:59.6px;height:44px;background:#fdfdfd;border:1px solid #dcdcdc;border-radius:4px;box-shadow:0 1px 1.5px rgba(0,0,0,.2)"></div>
<svg style="left:989.3px;top:753px" width="43" height="41.8" viewBox="0 0 43 41.8"><rect x="0" y="0" width="43" height="41.8" fill="#d8e6d6"/><rect x="0" y="0" width="43" height="2" fill="#9dbb9a"/><rect x="0" y="39.3" width="43" height="2.5" fill="#2f5f2c"/><rect x="0" y="0" width="5" height="41.8" fill="#3c7a36"/><rect x="38" y="0" width="5" height="41.8" fill="#2f5f2c"/><rect x="5" y="3.3" width="31.5" height="34.5" fill="#eef4ec"/><rect x="36.5" y="3.3" width="1.5" height="34.5" fill="#86b083"/><path d="M8 10 H15.5 L22 17.5 L29.5 8.5 H36 L25.5 21 L36.5 31 H28 L21.5 25 L15 31.5 H7.5 L18 21Z" fill="#2f7a2c" opacity=".55" transform="translate(0.8,1.6)"/><path d="M8 10 H15.5 L22 17.5 L29.5 8.5 H36 L25.5 21 L36.5 31 H28 L21.5 25 L15 31.5 H7.5 L18 21Z" fill="#4aa944"/><path d="M8 10 H15.5 L22 17.5 L18 21Z M29.5 8.5 H36 L25.5 21 L22 17.5Z" fill="#6cc466"/></svg>
<svg style="left:1057.5px;top:753.3px" width="35" height="42" viewBox="0 0 35 42"><rect x="0.5" y="0.5" width="33.5" height="41" rx="3" fill="#12a05a"/><rect x="4" y="3.5" width="26.5" height="17" fill="#fff"/><rect x="6.5" y="6.5" width="21.5" height="2.6" fill="#12a05a"/><rect x="6.5" y="11.5" width="21.5" height="2.6" fill="#12a05a"/><rect x="6.5" y="16.2" width="21.5" height="2" fill="#12a05a"/><rect x="3" y="36.5" width="29" height="2.5" fill="#fff"/><rect x="33" y="21" width="2" height="4" fill="#111"/></svg>
<span class="t" style="left:1064.00px;top:774.31px;font-size:10.5px;line-height:10.5px;color:#fff;font-weight:700;transform:scaleX(0.9959);transform-origin:left top;letter-spacing:.5px;">CSV</span>
<svg style="left:1124px;top:750.5px" width="44" height="46.5" viewBox="0 0 44 46.5"><path d="M0 9 h5 v34 h22 v3.5 h-27z" fill="#6a67c8"/><path d="M5.5 4.5 h5 v34 h22 v4 h-27z" fill="#6a67c8" opacity=".85"/><path d="M11 0 h19 l6 6 v32.5 h-25z" fill="#6a67c8"/><path d="M30 0 l6 6 h-6z" fill="#b9b8ea"/><g stroke="#fff" stroke-width="2"><path d="M15 6.5 h11 M15 11 h17 M15 15.5 h17 M15 20 h17"/></g><rect x="14" y="24" width="29" height="13" fill="#f06a3c"/></svg>
<span class="t" style="left:1141.00px;top:776.41px;font-size:10.5px;line-height:10.5px;color:#fff;font-weight:700;transform:scaleX(1.0651);transform-origin:left top;">DBF</span>
<svg style="left:1196px;top:752px" width="38" height="44" viewBox="1196 752 38 44"><path d="M1214.6 756 C1218 756.5 1222.5 760 1225.2 765 L1221 764.2 L1229.3 788.5 L1200.5 788.5 Z" fill="#5d5ba8" stroke="#34325f" stroke-width=".9" stroke-linejoin="round"/><rect x="1200" y="787.6" width="30" height="4.4" rx=".8" fill="#8886c6" stroke="#34325f" stroke-width=".8"/><path d="M1218.8 777.5 a3.6 3.6 0 1 0 2.6 6.2 a4.4 4.4 0 0 1 -2.6 -6.2z" fill="#f0cf4a"/><circle cx="1213.8" cy="769.8" r="1.3" fill="#f0cf4a"/><circle cx="1209" cy="782.7" r="1.2" fill="#f0cf4a"/></svg>
<span class="t" style="left:1410.50px;top:723.81px;font-size:17px;line-height:17px;color:#000;-webkit-text-stroke:.3px;transform:scaleX(0.8934);transform-origin:left top;">Erase temporary files</span>
<svg style="left:1560.5px;top:722px" width="19.5" height="19.5" viewBox="0 0 19.5 19.5"><rect x="0.75" y="0.75" width="18" height="18" rx="4" fill="#fff" stroke="#5e5e5e" stroke-width="1.2"/></svg>
<span class="t" style="left:1614.40px;top:723.81px;font-size:17px;line-height:17px;color:#8f8f8f;-webkit-text-stroke:.3px;transform:scaleX(0.9155);transform-origin:left top;">Without priority</span>
<svg style="left:1728.5px;top:722px" width="19.5" height="19.5" viewBox="0 0 19.5 19.5"><rect x="0" y="0" width="19.5" height="19.5" rx="4" fill="#cbcbcb"/><path d="M5.6 10.2 L8.5 13 L14.2 7" stroke="#f1f1f1" stroke-width="1.4" fill="none" stroke-linecap="round" stroke-linejoin="round"/></svg>
<div style="left:1757px;top:476.5px;width:27.5px;height:26px;background:#f1f1f1;border:1px solid #e3e3e3;border-radius:3px;box-shadow:0 1px 1.5px rgba(0,0,0,.22)"></div>
<svg style="left:1762.5px;top:485px" width="18" height="10" viewBox="0 0 18 10"><path d="M0 10 L9 0 L18 10Z" fill="#000"/></svg>
<div style="left:1758px;top:686.5px;width:25.6px;height:25.3px;background:#c9c9c9;border-radius:3px;box-shadow:0 1px 1.5px rgba(0,0,0,.25)"></div>
<svg style="left:1762px;top:694.5px" width="18" height="10" viewBox="0 0 18 10"><path d="M0 0 L9 10 L18 0Z" fill="#000"/></svg>
<svg style="left:1360px;top:841.3px" width="21" height="19" viewBox="0 0 21 19"><defs><linearGradient id="ga1360" x1="0" y1="0" x2="0" y2="1"><stop offset="0" stop-color="#9be86f"/><stop offset="1" stop-color="#3fb027"/></linearGradient></defs><g ><path d="M1 9.5 L9.5 1 L9.5 5 L17 5 Q20 5 20 8 L20 11 Q20 14 17 14 L9.5 14 L9.5 18Z" fill="url(#ga1360)" stroke="#2c8f1f" stroke-width="1.1" stroke-linejoin="round"/></g></svg>
<span class="t" style="left:1415.60px;top:842.81px;font-size:17px;line-height:17px;color:#000;-webkit-text-stroke:.3px;transform:scaleX(0.963);transform-origin:left top;"><u>B</u>ack</span>
<div style="left:1489.5px;top:833px;width:134px;height:35.7px;background:linear-gradient(#fff7d8 0,#fff0bc 30%,#ffd95a 42%,#ffe27a 70%,#fff09e 100%);border:1px solid #5c5c5c"></div>
<svg style="left:1496px;top:841.3px" width="21" height="19" viewBox="0 0 21 19"><defs><linearGradient id="ga1496" x1="0" y1="0" x2="0" y2="1"><stop offset="0" stop-color="#9be86f"/><stop offset="1" stop-color="#3fb027"/></linearGradient></defs><g transform="translate(21,0) scale(-1,1)"><path d="M1 9.5 L9.5 1 L9.5 5 L17 5 Q20 5 20 8 L20 11 Q20 14 17 14 L9.5 14 L9.5 18Z" fill="url(#ga1496)" stroke="#2c8f1f" stroke-width="1.1" stroke-linejoin="round"/></g></svg>
<span class="t" style="left:1554.00px;top:842.81px;font-size:17px;line-height:17px;color:#000;-webkit-text-stroke:.3px;transform:scaleX(0.9037);transform-origin:left top;"><u>N</u>ext</span>
<svg style="left:1634.9px;top:840.8px" width="21.5" height="20.5" viewBox="0 0 21.5 20.5"><defs><linearGradient id="gr1" x1="0" y1="0" x2="0" y2="1"><stop offset="0" stop-color="#f7542c"/><stop offset="1" stop-color="#e02c10"/></linearGradient></defs><rect x="0" y="0" width="21.5" height="20.5" rx="1.5" fill="url(#gr1)"/><rect x="0" y="0" width="21.5" height="5" fill="#ff8a5a" opacity=".55"/><rect x="5.5" y="8.3" width="11" height="3.8" rx=".6" fill="#fff"/></svg>
<span class="t" style="left:1683.60px;top:842.81px;font-size:17px;line-height:17px;color:#000;-webkit-text-stroke:.3px;transform:scaleX(0.9335);transform-origin:left top;">C<u>a</u>ncel</span>
<svg style="left:3.4px;top:48px" width="325.6" height="244.5" viewBox="3.4 48 325.6 244.5">
<defs>
<radialGradient id="pc" cx="148" cy="227" r="174" gradientUnits="userSpaceOnUse"><stop offset="0" stop-color="#ffffff"/><stop offset=".55" stop-color="#fbfbfb"/><stop offset=".8" stop-color="#f0f0f1"/><stop offset=".93" stop-color="#e6e6e8"/><stop offset=".968" stop-color="#dcdcde"/><stop offset=".978" stop-color="#fdfdfd"/><stop offset="1" stop-color="#f4f4f4"/></radialGradient>
<linearGradient id="pb" x1="0" y1="0" x2="0" y2="1"><stop offset="0" stop-color="#3db9fd"/><stop offset="1" stop-color="#2f9ff5"/></linearGradient>
<linearGradient id="prs" x1="0" y1="0" x2="1" y2="0"><stop offset="0" stop-color="#d6d6d6"/><stop offset=".5" stop-color="#ebebeb"/><stop offset="1" stop-color="#f6f6f6"/></linearGradient>
<linearGradient id="blinds" x1="0" y1="0" x2="0" y2="1"><stop offset="0" stop-color="#eceef3" stop-opacity="0"/><stop offset=".35" stop-color="#e3e6ee"/><stop offset="1" stop-color="#edeff4"/></linearGradient>
<pattern id="bl" x="0" y="0" width="6.5" height="10" patternUnits="userSpaceOnUse"><rect width="6.5" height="10" fill="#dfe3ee"/><rect x="0" width="2.2" height="10" fill="#f4f5fa"/></pattern>
<pattern id="st" x="0" y="0" width="10" height="4" patternUnits="userSpaceOnUse" patternTransform="rotate(4)"><rect width="10" height="4" fill="#ece9e4"/><rect y="0" width="10" height="1.6" fill="#514c47"/></pattern>
<pattern id="pl1" x="0" y="0" width="9" height="9" patternUnits="userSpaceOnUse"><rect width="9" height="9" fill="#55555a"/><rect width="4" height="9" fill="#26262a"/><rect width="9" height="3.5" fill="#1d1d20" opacity=".6"/><rect x="6" width="1" height="9" fill="#d8d8d8" opacity=".45"/><rect y="6" width="9" height="1" fill="#d8d8d8" opacity=".45"/></pattern>
<pattern id="pl2" x="0" y="0" width="11" height="11" patternUnits="userSpaceOnUse"><rect width="11" height="11" fill="#1f3f45"/><rect width="5" height="11" fill="#16282f"/><rect width="11" height="5" fill="#14242a" opacity=".6"/><rect x="8" width="1" height="11" fill="#c03a3a" opacity=".8"/><rect y="8" width="11" height="1" fill="#b8b84a" opacity=".7"/></pattern>
<clipPath id="cc"><circle cx="148" cy="227" r="169.5"/></clipPath>
<clipPath id="pcut"><rect x="3" y="48" width="301" height="244.5"/></clipPath>
<filter id="b1" x="-20%" y="-20%" width="140%" height="140%"><feGaussianBlur stdDeviation="0.9"/></filter>
<filter id="b2" x="-20%" y="-20%" width="140%" height="140%"><feGaussianBlur stdDeviation="2.2"/></filter>
</defs>
<rect x="3" y="48" width="327" height="60" fill="url(#pb)"/>
<rect x="3" y="108" width="327" height="185" fill="#f3f3f3"/>
<rect x="3" y="107" width="100" height="30" fill="#2f9ff5"/><rect x="268" y="108.5" width="62" height="184" fill="url(#prs)"/>
<rect x="268" y="108" width="62" height="6" fill="#dcdcdc" opacity=".7"/>
<circle cx="151" cy="230" r="176" fill="#000" opacity=".10" filter="url(#b2)"/>
<circle cx="148" cy="227" r="174" fill="url(#pc)"/>
<g clip-path="url(#cc)">
 <path d="M52 154 L52 119 C80 105 120 96 160 95 C210 95 255 105 287 125 L287 154Z" fill="url(#bl)" filter="url(#b1)"/>
 <path d="M52 154 L52 119 C80 105 120 96 160 95 C210 95 255 105 287 125 L287 154Z" fill="url(#blinds)" opacity=".3"/>
 <rect x="3" y="153.5" width="301" height="2.2" fill="#c9cbd0"/>
 <rect x="3" y="155.7" width="301" height="137" fill="#fbfbfb"/>
 <rect x="3" y="171.5" width="301" height="1.2" fill="#e2e3e6"/>
 <rect x="127" y="172" width="1" height="80" fill="#e4e5e8"/><rect x="196" y="172" width="1" height="40" fill="#e4e5e8"/>
 <rect x="3" y="262" width="301" height="31" fill="#f6f6f6"/>
</g>
<g clip-path="url(#pcut)" filter="url(#b1)">
 <!-- laptop -->
 <path d="M196 201 h29 v57 h-29z" fill="#c9cacc"/>
 <!-- red chair -->
 <rect x="122" y="239" width="8" height="17" rx="3" fill="#e0262a"/><rect x="178" y="239" width="9" height="17" rx="3" fill="#e0262a"/>
 <!-- woman 1 -->
 <path d="M42 165 h17 v14 h-17z" fill="#e2b09a"/>
 <path d="M5 196 C12 182 30 175 40 175 C50 181 60 181 70 175 C79 178 82 186 83 196 L84 243 L33 244 L31 215 C26 228 18 240 6 252 L4 252 L4 205Z" fill="url(#st)"/>
 <path d="M4 238 L14 230 L30 250 L33 262 L28 268 L4 252Z" fill="#e2b09a"/><path d="M4 200 L20 190 L32 214 L18 238 L4 246Z" fill="url(#st)"/>
 <path d="M32 242 L86 241 C92 256 93 275 89 293 L34 293 C30 276 30 258 32 242Z" fill="#141416"/>
 <ellipse cx="50" cy="150" rx="12.5" ry="17" fill="#e9bfad"/>
 <path d="M30 150 C27 130 40 120 52 121.5 C66 122 72 136 69 158 C66 160 64 158 63 150 C62 142 56 136 46 135 C40 138 37 146 38 156 C34 158 31 156 30 150Z" fill="#3b2b24"/>
 <ellipse cx="46.7" cy="148.5" rx="2.3" ry="1.2" fill="#4a332b"/><ellipse cx="55.3" cy="148.5" rx="2.3" ry="1.2" fill="#4a332b"/><path d="M44 145.5 q3-1.8 5.6 0 M52.6 145.5 q3-1.8 5.6 0" stroke="#4a332b" stroke-width="1" fill="none"/><ellipse cx="51" cy="154.5" rx="9" ry="7" fill="#dba08c" opacity=".35"/><path d="M45 158 q6 4 11 0" stroke="#c2555f" stroke-width="1.6" fill="none"/>
 <!-- woman 2 -->
 <path d="M100 196 C108 186 122 184 132 184 L132 244 L104 250 L96 242Z" fill="#ebebef"/>
 <path d="M174 184 C186 186 194 200 198 250 L180 254Z" fill="#ebebef"/>
 <path d="M132 170 L146 176 L160 200 L170 172 L176 188 L160 222 L140 200Z" fill="#fafafa"/>
 <path d="M127 184 L140 182 L158 220 L172 181 L178 184 L181 262 L126 264Z" fill="#17171a"/>
 <path d="M141 190 C144 215 152 232 160 236 C166 228 168 210 166 192" stroke="#a08c58" stroke-width="2.2" fill="none" opacity=".85"/>
 <path d="M121 260 L190 258 L193 293 L121 293Z" fill="url(#pl1)"/>
 <path d="M186 268 l22 6 l4 8 l-10 4 l-16-10z" fill="#e2b09a"/>
 <path d="M148 168 h14 v14 l-7 8 l-7-8z" fill="#e2b09a"/>
 <ellipse cx="156" cy="161" rx="12" ry="16.5" fill="#e9bfad"/>
 <path d="M137 160 C134 142 146 133 157 134 C170 134 176 148 172 172 C169 172 167 168 167 160 C166 152 160 148 152 148 C146 150 144 156 144 166 C140 168 138 166 137 160Z" fill="#3b2b24"/>
 <ellipse cx="151.7" cy="161.5" rx="2.3" ry="1.2" fill="#4a332b"/><ellipse cx="160.3" cy="161.5" rx="2.3" ry="1.2" fill="#4a332b"/><path d="M149 158.5 q3-1.8 5.6 0 M157.6 158.5 q3-1.8 5.6 0" stroke="#4a332b" stroke-width="1" fill="none"/><ellipse cx="156" cy="167.5" rx="9" ry="7" fill="#dba08c" opacity=".35"/><path d="M151 171 q5 3.5 10 0" stroke="#c2555f" stroke-width="1.6" fill="none"/>
 <!-- woman 3 -->
 <path d="M240 150 C238 130 250 122 262 124 C278 124 286 140 288 160 C290 175 292 186 293 196 C286 190 280 180 276 170 L246 168 C242 164 240 158 240 150Z" fill="#33241f"/>
 <path d="M236 172 L252 166 L256 186 L268 164 L280 170 L262 200 L246 190Z" fill="#fafafa"/>
 <path d="M213 218 C216 196 224 180 240 172 L256 196 L272 168 C284 172 289 184 290 200 L288 254 L230 252 L232 228 C224 230 216 228 213 218Z" fill="#8f9296"/>
 <path d="M216 206 C236 214 262 210 286 200 L286 214 C262 226 236 230 214 222Z" fill="#85888c"/>
 <path d="M262 206 l22 -8 l2 7 l-22 9z" fill="#e2b09a"/><path d="M215 208 l14 4 l-2 7 l-14-4z" fill="#e2b09a"/>
 <path d="M226 249 L287 251 L286 293 L225 293Z" fill="url(#pl2)"/>
 <ellipse cx="259" cy="154" rx="11.5" ry="16.5" fill="#e9bfad"/>
 <path d="M244 150 C244 136 252 130 262 131 C272 132 278 142 278 158 C274 150 268 142 258 140 C252 142 248 148 248 158 C245 156 244 154 244 150Z" fill="#33241f"/>
 <ellipse cx="254.2" cy="154.5" rx="2.3" ry="1.2" fill="#4a332b"/><ellipse cx="262.8" cy="154.5" rx="2.3" ry="1.2" fill="#4a332b"/><path d="M251.5 151.5 q3-1.8 5.6 0 M260.1 151.5 q3-1.8 5.6 0" stroke="#4a332b" stroke-width="1" fill="none"/><ellipse cx="258.5" cy="160.5" rx="9" ry="7" fill="#dba08c" opacity=".35"/><path d="M253 164 q5 3.5 10 0" stroke="#c2555f" stroke-width="1.6" fill="none"/>
</g>
</svg>
<span class="t" style="left:47.20px;top:304.41px;font-size:45px;line-height:45px;color:#0a0a0a;font-weight:700;transform:scaleX(1.198);transform-origin:left top;-webkit-text-stroke:1.6px #0a0a0a;">Work</span>
<span class="t" style="left:183.50px;top:304.41px;font-size:45px;line-height:45px;color:#8a8a8a;font-weight:700;transform:scaleX(1.2538);transform-origin:left top;-webkit-text-stroke:2px #555;">DB</span>
<span class="t" style="left:17.90px;top:372.55px;font-size:22.5px;line-height:22.5px;color:#4a4a4a;transform:scaleX(1.022);transform-origin:left top;-webkit-text-stroke:.8px #4a4a4a;">Address Deduplication</span>
<span class="t" style="left:17.50px;top:427.86px;font-size:16px;line-height:16px;color:#4a4a4a;transform:scaleX(1.2999);transform-origin:left top;-webkit-text-stroke:.5px #4a4a4a;">Create the final DM file based</span>
<span class="t" style="left:17.50px;top:449.16px;font-size:16px;line-height:16px;color:#4a4a4a;transform:scaleX(1.3121);transform-origin:left top;-webkit-text-stroke:.5px #4a4a4a;">on the input data and STOP files:</span>
<span class="t" style="left:18.00px;top:490.86px;font-size:16px;line-height:16px;color:#4a4a4a;transform:scaleX(1.3559);transform-origin:left top;-webkit-text-stroke:.5px #4a4a4a;">* import input data in different</span>
<span class="t" style="left:29.50px;top:511.96px;font-size:16px;line-height:16px;color:#4a4a4a;transform:scaleX(1.3685);transform-origin:left top;-webkit-text-stroke:.5px #4a4a4a;">formats</span>
<span class="t" style="left:18.00px;top:533.86px;font-size:16px;line-height:16px;color:#4a4a4a;transform:scaleX(1.307);transform-origin:left top;-webkit-text-stroke:.5px #4a4a4a;">* remove duplicate addresses</span>
<span class="t" style="left:18.00px;top:554.66px;font-size:16px;line-height:16px;color:#4a4a4a;transform:scaleX(1.3343);transform-origin:left top;-webkit-text-stroke:.5px #4a4a4a;">* family duplication</span>
<span class="t" style="left:18.00px;top:575.66px;font-size:16px;line-height:16px;color:#4a4a4a;transform:scaleX(1.3176);transform-origin:left top;-webkit-text-stroke:.5px #4a4a4a;">* remove addresses from</span>
<span class="t" style="left:29.50px;top:596.66px;font-size:16px;line-height:16px;color:#4a4a4a;transform:scaleX(1.2772);transform-origin:left top;-webkit-text-stroke:.5px #4a4a4a;">HouseFile</span>
<span class="t" style="left:18.00px;top:617.86px;font-size:16px;line-height:16px;color:#4a4a4a;transform:scaleX(1.3293);transform-origin:left top;-webkit-text-stroke:.5px #4a4a4a;">* create deduplication statistics</span>
<span class="t" style="left:144.50px;top:665.41px;font-size:17px;line-height:17px;color:#4f4f4f;transform:scaleX(1.4418);transform-origin:left top;-webkit-text-stroke:.35px #4f4f4f;">Version: 15.5</span>
<span class="t" style="left:39.60px;top:727.90px;font-size:58px;line-height:58px;color:#0b5cb5;font-weight:700;transform:scaleX(0.8631);transform-origin:left top;-webkit-text-stroke:1.3px #0b5cb5;">Direct</span>
<span class="t" style="left:183.00px;top:727.90px;font-size:58px;line-height:58px;color:#3f4658;font-weight:700;transform:scaleX(0.8432);transform-origin:left top;-webkit-text-stroke:1.3px #3f4658;">Data</span>
<span class="t" style="left:41.00px;top:792.65px;font-size:14px;line-height:14px;color:#555;-webkit-text-stroke:.3px;transform:scaleX(0.9405);transform-origin:left top;">YOUR QUALITY DATABASE SPECIALIST</span>
<svg style="left:64px;top:706px" width="44" height="40" viewBox="0 0 44 40"><path d="M22 0 L42 14 L30 24 L10 12Z" fill="#8cc4f4" opacity=".75"/><path d="M14 12 L32 16 L26 30 L10 24Z" fill="#4a9be8" opacity=".8"/><path d="M12 24 L22 26 L18 36 L10 33Z" fill="#0b5cb5"/></svg>
<svg style="left:590.3px;top:134.8px" width="25" height="23.00" viewBox="0 0 25 23"><path d="M0.8 6 L14 0.3 L23.3 15.4 L10.1 21.8Z" fill="#f3f5f8" stroke="#c9cdd4" stroke-width=".9" stroke-linejoin="round"/><path d="M3.2 7.2 L6 6 M4.2 9.4 L7 8.2" stroke="#d9dde3" stroke-width=".8"/><path d="M21 5.2 L14.2 13.6" stroke="#9a7440" stroke-width="1.7" stroke-linecap="round"/><path d="M10.3 16.6 C11 13.5 14.5 11.6 17.2 12.1 C19.3 12.5 20.8 13.6 21.6 15.2 L21.2 18.6 C18.5 19.6 15.5 19.6 12.6 19.2 C11 19 10.1 18 10.3 16.6Z" fill="#d6c033" stroke="#b39b22" stroke-width=".7"/><path d="M13 15.5 C15 14.6 17 14.6 19 15.6" stroke="#f0e27a" stroke-width="1" fill="none"/><path d="M20.6 13.8 L24.2 14.6 L24.3 19.8 L20.3 19.6Z" fill="#5a9a38"/></svg>
<svg style="left:954.5px;top:134.6px" width="25" height="23.00" viewBox="0 0 25 23"><path d="M0.8 6 L14 0.3 L23.3 15.4 L10.1 21.8Z" fill="#f3f5f8" stroke="#c9cdd4" stroke-width=".9" stroke-linejoin="round"/><path d="M3.2 7.2 L6 6 M4.2 9.4 L7 8.2" stroke="#d9dde3" stroke-width=".8"/><path d="M21 5.2 L14.2 13.6" stroke="#9a7440" stroke-width="1.7" stroke-linecap="round"/><path d="M10.3 16.6 C11 13.5 14.5 11.6 17.2 12.1 C19.3 12.5 20.8 13.6 21.6 15.2 L21.2 18.6 C18.5 19.6 15.5 19.6 12.6 19.2 C11 19 10.1 18 10.3 16.6Z" fill="#d6c033" stroke="#b39b22" stroke-width=".7"/><path d="M13 15.5 C15 14.6 17 14.6 19 15.6" stroke="#f0e27a" stroke-width="1" fill="none"/><path d="M20.6 13.8 L24.2 14.6 L24.3 19.8 L20.3 19.6Z" fill="#5a9a38"/></svg>
<svg style="left:745.5px;top:134.5px" width="20.5" height="23.5" viewBox="0 0 20.5 23.5"><defs><linearGradient id="nd" x1="0" y1="0" x2="1" y2="1"><stop offset="0" stop-color="#ffffff"/><stop offset="1" stop-color="#d5e4f7"/></linearGradient><radialGradient id="ns"><stop offset="0" stop-color="#ffe23a"/><stop offset=".45" stop-color="#ffb428"/><stop offset="1" stop-color="#f0522a"/></radialGradient></defs><path d="M2 1.2 H13.5 L19.3 7 V22 H2Z" fill="url(#nd)" stroke="#5b8fd4" stroke-width="1.5" stroke-linejoin="round"/><path d="M13.5 1.2 V7 H19.3" fill="#eaf2fc" stroke="#5b8fd4" stroke-width="1.1" stroke-linejoin="round"/><circle cx="5.4" cy="7.4" r="4.8" fill="url(#ns)"/></svg>
<svg style="left:407px;top:73px" width="59" height="41" viewBox="0 0 59 41"><rect x="0.5" y="0.5" width="58" height="20.3" fill="#ffffff"/><rect x="0.5" y="20.5" width="58" height="20" fill="#dc161b"/><path d="M0.5 0.5 L28.5 20.5 L0.5 40.5Z" fill="#17457e"/></svg>
<svg style="left:333px;top:70px" width="57" height="47" viewBox="333 70 57 47"><defs>
<radialGradient id="uf1" cx=".45" cy=".4" r=".7"><stop offset="0" stop-color="#ffc27a"/><stop offset="1" stop-color="#f98f3c"/></radialGradient>
<linearGradient id="ub1" x1="0" y1="0" x2="0" y2="1"><stop offset="0" stop-color="#5aa2ee"/><stop offset="1" stop-color="#2f7bd8"/></linearGradient>
<linearGradient id="ub2" x1="0" y1="0" x2="0" y2="1"><stop offset="0" stop-color="#b4b4b4"/><stop offset="1" stop-color="#858585"/></linearGradient></defs>
<path d="M334 108 C334 99 340 95.5 349 95.5 C358 95.5 363 99 363 108 C363 112 355 113.5 348.5 113.5 C342 113.5 334 112 334 108Z" fill="url(#ub1)"/>
<path d="M346.5 95.5 L351.5 95.5 L354 99 L351.5 108 L350 99Z" fill="#f3f3f5"/><path d="M350.2 96 L352.6 96 L353 107.5 L351.5 109.5 L350 107.5Z" fill="#d41f26"/>
<ellipse cx="349.5" cy="87" rx="8.3" ry="9.6" fill="url(#uf1)"/>
<path d="M339.5 86 C337.5 76 344 70.5 350 70.8 C357 70.5 360.5 76.5 359 84 C357.5 80.5 354 79 350 80.2 C346.5 81 344 80.5 342.5 82.5 C342 84 341 86.5 340.5 88.5Z" fill="#b47c10"/>
<path d="M357 111 C357 101.5 363 98 372.5 98 C382 98 389 101.5 389 111 C389 115 380 116.8 373 116.8 C365 116.8 357 115 357 111Z" fill="url(#ub2)"/>
<path d="M368 98 L375 98 L377 102 L373 112 L368.5 102Z" fill="#f2f2f2"/><path d="M370 98.5 L372.8 98.5 L373.5 110.5 L371.5 113 L369.6 110.5Z" fill="#f2c51c"/>
<ellipse cx="371.5" cy="89.5" rx="8.8" ry="10" fill="url(#uf1)"/>
<path d="M361.5 88 C359 79 364.5 73.3 371.5 73.2 C380 73 385 79 383 89 C381.5 85 378 82.5 373 83 C369 83.5 366 83 364.5 85 C364 86.5 363.5 89 363 91Z" fill="#1a1a1c"/>
</svg>
<svg style="left:8px;top:7.5px" width="24" height="23.5" viewBox="8 7.5 24 23.5">
<path d="M15 11.5 C14 8.5 18.5 7.5 19 10 C19.3 11.3 18.6 12 19.2 12.6 L23.5 12.6 L23.5 15 C25.5 13.8 28 15 27.5 17 C27 19 25 19 23.5 18.2 L23.5 24 L20.5 24 L20.5 29 L16 29 L16 25.5 C15.5 24 14 24 13.8 25.5 L13.8 29 L9.3 29 L9.3 14.5 L11.5 14.5 L11.5 12.6 L14.6 12.6 C15.2 12.3 15.2 12 15 11.5Z" fill="#4c92de" stroke="#3473c4" stroke-width=".7"/>
<path d="M18.5 22.5 L22.5 17.5 L22.7 20 L25.5 20 L25.5 24 L22.7 24 L22.6 26.5Z" fill="#3fb42c" stroke="#2a8a1e" stroke-width=".6"/>
<path d="M24 30 L24 25 L22.8 25 L27 19.8 L31 25 L29.6 25 L29.6 30Z" fill="#f0642c" stroke="#c8421a" stroke-width=".6"/>
</svg>
</div></body></html>
